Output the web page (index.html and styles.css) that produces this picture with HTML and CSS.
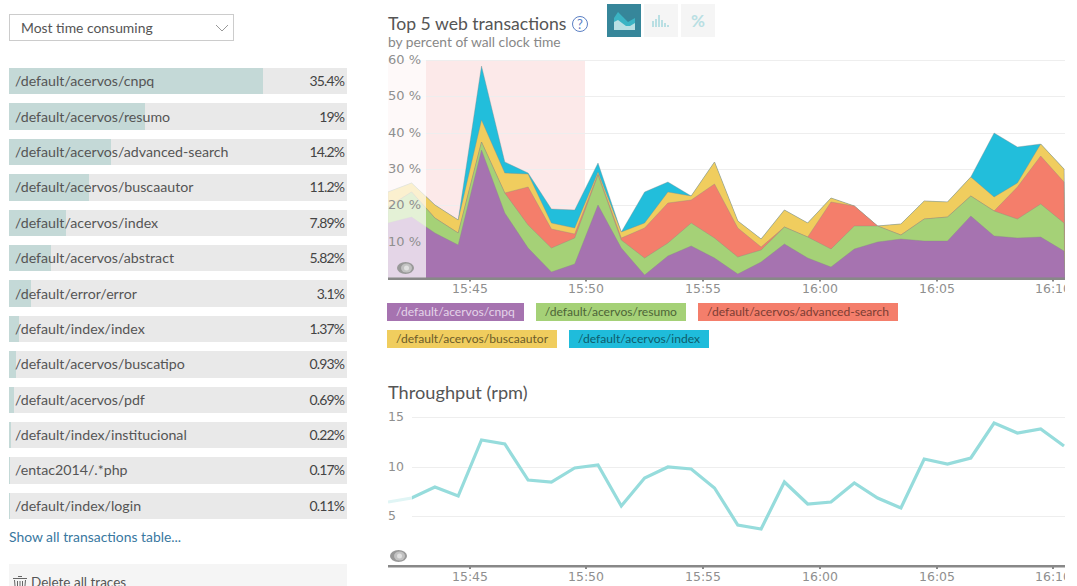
FILE: index.html
```html
<!DOCTYPE html>
<html lang="en">
<head>
    <meta charset="UTF-8">
    <title>Web transactions</title>
    <link rel="stylesheet" href="styles.css">
</head>
<body>
    <div class="page">
        <div class="side">
            <div class="select">
                <span>Most time consuming</span>
                <svg class="chevron" width="14" height="8" viewBox="0 0 14 8"><path d="M1 1l6 6 6-6" fill="none" stroke="#999" stroke-width="1"/></svg>
            </div>

            <ul class="tx_list" id="tx_list"></ul>

            <a class="show_all" href="#">Show all transactions table...</a>

            <div class="delete_box">
                <svg width="14" height="16" viewBox="0 0 14 16"><path d="M5 1.500h4M0 3.500h14M1.500 5l1 11h9l1-11M4.500 6v9M7 6v9M9.500 6v9" fill="none" stroke="#666" stroke-width="1"/></svg>
                <span>Delete all traces</span>
            </div>
        </div>

        <div class="main">
            <div class="chart_head">
                <div class="chart_title">
                    <h2>Top 5 web transactions <span class="help">?</span></h2>
                    <p>by percent of wall clock time</p>
                </div>
                <div class="toggles">
                    <div class="toggle active">
                        <svg width="21" height="18" viewBox="0 0 21 18"><path d="M0 6l4-6 5 5 5 5 7-4v12H0z" fill="#3bb4c4"/><path d="M0 10l4-2 8 6 4 0 5-3v7H0z" fill="#b9dfe3"/></svg>
                    </div>
                    <div class="toggle">
                        <svg width="18" height="12" viewBox="0 0 18 12"><path d="M0 6h2v6H0zM3 4h2v8H3zM6 0h2v12H6zM9 5h2v7H9zM12 8h2v4h-2zM15 10h2v2h-2z" fill="#b9dfe3"/></svg>
                    </div>
                    <div class="toggle percent">%</div>
                </div>
            </div>

            <svg class="chart" id="area_chart" width="677" height="246" viewBox="388 50 677 246"></svg>

            <div class="legend" id="legend"></div>

            <h2 class="throughput_title">Throughput (rpm)</h2>
            <svg class="chart" id="line_chart" width="677" height="180" viewBox="388 406 677 180"></svg>
        </div>
    </div>

    <script src="script.js"></script>
</body>
</html>
```

FILE: styles.css
```css
* {
    box-sizing: border-box;
}

html, body {
    height: 586px;
    margin: 0;
    overflow: hidden;
}

body {
    font-family: "Lato", "Liberation Sans", sans-serif;
    color: #555;
    background-color: white;
}

.page {
    display: flex;
    padding-left: 9px;
}

.side {
    width: 338px;
    margin-right: 41px;
    padding-top: 14px;
    flex-shrink: 0;
}

.select {
    display: flex;
    align-items: center;
    justify-content: space-between;
    width: 225px;
    height: 27px;
    padding: 0 4px 0 11px;
    border: 1px solid #ccc;
    font-size: 13.9px;
}

.tx_list {
    list-style: none;
    margin: 27px 0 0;
    padding: 0;
    display: flex;
    flex-direction: column;
    gap: 9px;
}

.tx_row {
    position: relative;
    display: flex;
    justify-content: space-between;
    align-items: center;
    height: 26.4px;
    padding: 0 3px 1px 6px;
    background-color: #e9e9e9;
    font-size: 14.2px;
}

.tx_bar {
    position: absolute;
    left: 0;
    top: 0;
    bottom: 0;
    background-color: #c4d9d7;
}

.tx_name, .tx_pct {
    position: relative;
}

.tx_pct {
    color: #444;
    font-size: 14px;
    letter-spacing: -0.9px;
}

.show_all {
    display: block;
    margin-top: 9px;
    font-size: 13.9px;
    line-height: 18px;
    color: #39789f;
    text-decoration: none;
}

.delete_box {
    display: flex;
    align-items: flex-start;
    gap: 4px;
    height: 40px;
    margin-top: 18px;
    padding: 11px 0 0 4px;
    background-color: #f5f5f5;
    font-size: 13.5px;
    line-height: 15px;
}

.main {
    width: 677px;
    flex-shrink: 0;
}

.chart_head {
    display: flex;
    height: 50px;
}

.chart_title {
    width: 219px;
    padding-top: 14px;
}

h2 {
    margin: 0;
    font-size: 17.6px;
    font-weight: normal;
    line-height: 20px;
}

.chart_title p {
    margin: 0;
    font-size: 13.8px;
    line-height: 16px;
    color: #888;
}

.help {
    display: inline-flex;
    align-items: center;
    justify-content: center;
    width: 16px;
    height: 16px;
    margin-left: 1px;
    border: 1px solid #5b7fc4;
    border-radius: 50%;
    font-size: 13px;
    color: #5b7fc4;
    vertical-align: 1px;
}

.toggles {
    display: flex;
    gap: 3px;
    padding-top: 4px;
}

.toggle {
    display: flex;
    align-items: center;
    justify-content: center;
    width: 34px;
    height: 33px;
    background-color: #f5f5f5;
}

.toggle.active {
    background-color: #36869a;
}

.percent {
    font-size: 17px;
    font-weight: bold;
    color: #b9dfe3;
}

.chart {
    display: block;
}

.chart text {
    font-family: "DejaVu Sans", sans-serif;
    font-size: 12.5px;
    fill: #8f8f8f;
}

.chart text.pct_label {
    font-size: 13px;
}

.legend {
    display: flex;
    flex-wrap: wrap;
    gap: 9px 12px;
    width: 560px;
    margin: 7px 0 0 -1px;
}

.legend_item {
    height: 18px;
    padding: 0 9px;
    font-size: 12.1px;
    line-height: 18px;
}

.cnpq { background-color: #a673b0; color: #e4d3e8; }
.resumo { background-color: #a5d177; color: #4d6538; }
.search { background-color: #f47e6b; color: #7c3d33; }
.buscaautor { background-color: #f0cd5e; color: #6c5c2a; }
.index { background-color: #1fbcdb; color: #0e5d6c; }

.throughput_title {
    margin-top: 34px;
    height: 24px;
    font-size: 18.2px;
}
```

FILE: script.js
```js
// pixel y of the top of each layer, one value per point
const layers = [
    { color: '#22bedb', y: [192,183,205,220,66,162,173,209,210,163,232,192,182,196,162,221,239,210,223,198,206,226,224,201,202,177,133,147,144,169] },
    { color: '#f0cd5e', y: [192,183,205,220,120,173,174,223,228,172,232,223,192,196,162,221,239,210,223,198,206,226,224,201,202,177,197,183,144,169] },
    { color: '#f47e6b', y: [207,192,218,233,142,193,187,229,234,174,238,228,203,200,184,228,247,227,237,202,206,226,235,219,217,196,211,187,156,182] },
    { color: '#a5d177', y: [207,192,218,233,142,193,225,248,238,175,240,258,243,223,238,257,250,227,237,249,226,226,235,219,217,196,211,219,204,223] },
    { color: '#a673b0', y: [223,217,233,245,150,213,248,272,264,205,248,275,256,246,258,274,262,244,258,267,249,242,239,241,241,216,236,238,237,251] }
];
const throughput = [502,498,487,496,440,444,480,482,468,465,506,478,467,469,488,525,529,482,504,502,483,498,508,459,464,458,423,433,429,446];

const transactions = [
    ['/default/acervos/cnpq', '35.4'],
    ['/default/acervos/resumo', '19'],
    ['/default/acervos/advanced-search', '14.2'],
    ['/default/acervos/buscaautor', '11.2'],
    ['/default/acervos/index', '7.89'],
    ['/default/acervos/abstract', '5.82'],
    ['/default/error/error', '3.1'],
    ['/default/index/index', '1.37'],
    ['/default/acervos/buscatipo', '0.93'],
    ['/default/acervos/pdf', '0.69'],
    ['/default/index/institucional', '0.22'],
    ['/entac2014/.*php', '0.17'],
    ['/default/index/login', '0.11']
];

const legend = [
    ['cnpq', '/default/acervos/cnpq'],
    ['resumo', '/default/acervos/resumo'],
    ['search', '/default/acervos/advanced-search'],
    ['buscaautor', '/default/acervos/buscaautor'],
    ['index', '/default/acervos/index']
];

const times = [[470, '15:45'], [586, '15:50'], [703, '15:55'], [820, '16:00'], [937, '16:05'], [1053, '16:10']];

function pointX(i) {
    return i === 0 ? 388 : 411.6 + (i - 1) * 23.3;
}

function linePoints(ys) {
    return ys.map((y, i) => pointX(i) + ',' + y).join(' ');
}

function axis(baseline, labelY) {
    let out = `<rect x="388" y="${baseline}" width="677" height="2.500" fill="#888"/>`;
    times.forEach(t => {
        out += `<rect x="${t[0] - 1}" y="${baseline + 2}" width="2" height="2" fill="#888"/>`;
        out += `<text x="${t[0]}" y="${labelY}" text-anchor="middle">${t[1]}</text>`;
    });
    return out;
}

function eye(x, y) {
    return `<ellipse cx="${x}" cy="${y}" rx="8.500" ry="6" fill="#999"/>` +
        `<ellipse cx="${x + 1}" cy="${y}" rx="5.500" ry="4.500" fill="white" fill-opacity="0.4"/>` +
        `<circle cx="${x + 1}" cy="${y}" r="2.500" fill="white" fill-opacity="0.5"/>`;
}

function drawAreaChart() {
    let out = '<rect x="388" y="60" width="197" height="218" fill="#fce9e9"/>';
    [60, 96, 133, 169, 205, 242].forEach(y => {
        out += `<rect x="388" y="${y}" width="677" height="1" fill="#eee"/>`;
    });
    layers.forEach(layer => {
        out += `<polygon points="388,278 ${linePoints(layer.y)} 1065,278" fill="${layer.color}" stroke="#888" stroke-width="0.5" stroke-opacity="0.7"/>`;
    });
    out += '<rect x="388" y="60" width="38" height="218" fill="white" fill-opacity="0.7"/>';
    [[64, '60 %'], [100, '50 %'], [137, '40 %'], [173, '30 %'], [209, '20 %'], [246, '10 %']].forEach(l => {
        out += `<text class="pct_label" x="388" y="${l[0]}">${l[1]}</text>`;
    });
    out += axis(277.5, 293) + eye(405.5, 268);
    document.getElementById('area_chart').innerHTML = out;
}

function drawLineChart() {
    let out = '';
    [417, 467, 516].forEach(y => {
        out += `<rect x="412" y="${y}" width="653" height="1" fill="#eee"/>`;
    });
    out += `<polyline points="${linePoints(throughput)}" fill="none" stroke="#96dcdc" stroke-width="3.200"/>`;
    out += '<rect x="388" y="490" width="24" height="20" fill="white" fill-opacity="0.7"/>';
    [[421, '15'], [471, '10'], [520, '5']].forEach(l => {
        out += `<text x="388" y="${l[0]}">${l[1]}</text>`;
    });
    out += axis(565, 581) + eye(398.5, 556);
    document.getElementById('line_chart').innerHTML = out;
}

function drawList() {
    const max = 35.4;
    let out = '';
    transactions.forEach(t => {
        const width = Math.max(parseFloat(t[1]) / max * 254, 1);
        out += `<li class="tx_row"><div class="tx_bar" style="width: ${width}px"></div>` +
            `<span class="tx_name">${t[0]}</span><span class="tx_pct">${t[1]}%</span></li>`;
    });
    document.getElementById('tx_list').innerHTML = out;
}

function drawLegend() {
    document.getElementById('legend').innerHTML = legend
        .map(l => `<div class="legend_item ${l[0]}">${l[1]}</div>`)
        .join('');
}

drawList();
drawLegend();
drawAreaChart();
drawLineChart();
```
